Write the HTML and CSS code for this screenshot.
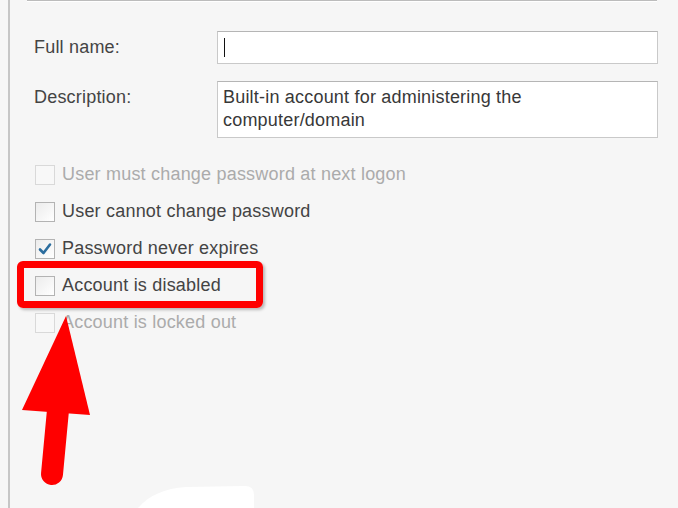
FILE: index.html
```html
<!DOCTYPE html>
<html lang="en">
<head>
  <meta charset="UTF-8">
  <title>Administrator Properties</title>
  <link rel="stylesheet" href="styles.css">
</head>
<body>
  <div class="frame">
    <div class="sep"></div>

    <div class="field">
      <label class="field-label" for="fullname">Full name:</label>
      <div class="input"><span class="caret"></span></div>
    </div>

    <div class="field">
      <label class="field-label">Description:</label>
      <div class="input textarea">Built-in account for administering the<br>computer/domain</div>
    </div>

    <ul class="checks">
      <li class="check disabled"><span class="box"></span>User must change password at next logon</li>
      <li class="check"><span class="box"></span>User cannot change password</li>
      <li class="check"><span class="box">
        <svg viewBox="0 0 20 20" width="20" height="20"><path d="M5 10.5 L8.5 14 L15 5.5" fill="none" stroke="#2b6d9e" stroke-width="2.6" stroke-linecap="round" stroke-linejoin="round"/></svg>
      </span>Password never expires</li>
      <li class="check"><span class="box"></span>Account is disabled</li>
      <li class="check disabled"><span class="box"></span>Account is locked out</li>
    </ul>
  </div>

  <!-- annotation drawn over the screenshot -->
  <div class="highlight"></div>
  <svg class="marks" width="678" height="508" viewBox="0 0 678 508">
    <polygon points="66,316 22,410 90,415" fill="#ff0000"/>
    <line x1="58" y1="410" x2="52" y2="474" stroke="#ff0000" stroke-width="22" stroke-linecap="round"/>
    <path d="M138 508 C148 496 165 488 186 487 L245 486 Q254 486 254 495 L254 508 Z" fill="#ffffff"/>
  </svg>
</body>
</html>
```

FILE: styles.css
```css
body {
  margin: 0;
  position: relative;
  width: 678px;
  height: 508px;
  overflow: hidden;
  background: #f6f6f6;
  font-family: 'Liberation Sans', Arial, sans-serif;
  font-size: 18px;
  letter-spacing: 0.2px;
  color: #444444;
}
.frame {
  margin-left: 8px;
  height: 508px;
  box-sizing: border-box;
  border-left: 2px solid #c6c6c6;
  padding-left: 24px;
}
.sep {
  margin-left: -7px;
  width: 630px;
  border-top: 1px solid #bcbcbc;
  border-bottom: 1px solid #ffffff;
}
.field {
  display: grid;
  grid-template-columns: 183px 441px;
  margin-top: 29px;
}
.field + .field {
  margin-top: 17px;
}
.field-label {
  line-height: 33px;
}
.input {
  box-sizing: border-box;
  height: 33px;
  background: #ffffff;
  border: 1px solid #c9c9c9;
  border-top-color: #b5b5b5;
  display: flex;
  align-items: center;
  padding-left: 6px;
}
.caret {
  width: 1px;
  height: 19px;
  background: #111;
}
.textarea {
  height: 57px;
  display: block;
  padding: 4px 0 0 5px;
  line-height: 23px;
  color: #383838;
}
.checks {
  list-style: none;
  margin: 18px 0 0 0;
  padding: 0;
}
.check {
  display: flex;
  align-items: center;
  gap: 7px;
  height: 37px;
  margin-left: 1px;
}
.check.disabled {
  color: #ababab;
}
.box {
  box-sizing: border-box;
  width: 20px;
  height: 20px;
  border: 1px solid #b3b3b3;
  background: linear-gradient(135deg, #ececec, #ffffff);
  display: flex;
}
.check.disabled .box {
  border-color: #d9d9d9;
  background: #f8f8f8;
}
.box svg {
  margin: -1px;
}
.highlight {
  position: absolute;
  left: 17px;
  top: 261px;
  width: 246px;
  height: 47px;
  box-sizing: border-box;
  border: 7px solid #ff0000;
  border-radius: 6px;
  box-shadow: 2px 2px 3px rgba(0, 0, 0, 0.25);
}
.marks {
  position: absolute;
  left: 0;
  top: 0;
  pointer-events: none;
}
```
